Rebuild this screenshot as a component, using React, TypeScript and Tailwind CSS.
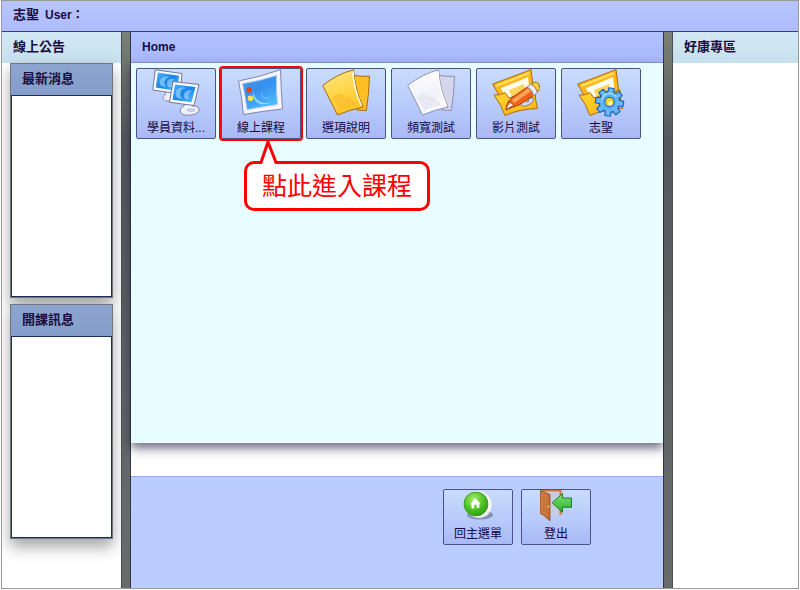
import type { ReactNode } from "react";

interface Shortcut {
  id: string;
  label: string;
  icon: ReactNode;
  hint?: string;
}

/* ── Icons ── */

function ComputersIcon() {
  return (
    <svg viewBox="0 0 48 48" className="h-12 w-12" aria-hidden="true">
      <defs>
        <linearGradient id="pc-screen" x1="0" y1="0" x2="1" y2="1">
          <stop offset="0" stopColor="#55b4fa" />
          <stop offset="0.5" stopColor="#1583ea" />
          <stop offset="1" stopColor="#5cc8ff" />
        </linearGradient>
      </defs>
      <path d="M14 22l-1 4c-3 1-2 6 2 6h6V22z" fill="#eceef8" stroke="#8d90b0" />
      <path d="M3.300 .8L30 4.500 28 25 .8 21z" fill="#fafbff" stroke="#73769c" strokeLinejoin="round" />
      <path d="M5.800 3.500L27 6.700 25.300 22 3.800 18.500z" fill="url(#pc-screen)" />
      <path d="M9 17c-4-6 2-11 8-9-4 1-6 5-3 10zM15 16c-1-5 4-8 8-5-3 0-4 3-2 7-3 1-5 0-6-2z" fill="#a9dcff" opacity=".6" />
      <path d="M33 34l-1 3c-5 2-5 8 1 9 8 1 15-2 14-6-1-3-4-3-7-3v-3z" fill="#f0f2fa" stroke="#7f82a5" />
      <ellipse cx="39" cy="41" rx="4.500" ry="2" fill="#c9cee4" />
      <path d="M21 12.500L47 15.500 42 36.500 17.500 33.300z" fill="#fafbff" stroke="#73769c" strokeLinejoin="round" />
      <path d="M23 15.500L43.500 18 39.600 33.300 20.500 30.700z" fill="url(#pc-screen)" />
      <path d="M25 29c-4-6 1-12 8-10-5 1-6 5-3 11zM32 28c-1-5 4-8 8-6-3 1-4 4-3 8-3 1-4 0-5-2z" fill="#a9dcff" opacity=".6" />
    </svg>
  );
}

function ScreenIcon() {
  return (
    <svg viewBox="0 0 48 48" className="h-12 w-12" aria-hidden="true">
      <defs>
        <linearGradient id="screen-fill" x1="0" y1="0" x2="0.6" y2="1">
          <stop offset="0" stopColor="#4a98e8" />
          <stop offset="0.5" stopColor="#3590ee" />
          <stop offset="1" stopColor="#4dbaff" />
        </linearGradient>
      </defs>
      <path d="M1.500 12Q23 8 43.500.7 44 20 45.500 40 26 42 6.500 45.500 5 28 1.500 12z" fill="#f5f6ff" stroke="#8185a8" strokeLinejoin="round" />
      <path d="M5.500 14.700Q22 12 39.500 6.500 39 21 40.500 35.500 26 37.500 10 40.700 8.500 28 5.500 14.700z" fill="url(#screen-fill)" stroke="#b4c8f4" />
      <path d="M16 21c-2 13 10 18 21 11-9 5-20 1-21-11z" fill="#9cd6ff" />
      <path d="M25 20c-2 7 4 11 9 7-4 6-13 2-9-7z" fill="#6bbaff" />
      <circle cx="12.300" cy="21" r="2.800" fill="#ff3b14" />
      <circle cx="13.500" cy="29.300" r="2.800" fill="#ffe14d" />
    </svg>
  );
}

function PapersIcon({ tone }: { tone: "gold" | "silver" }) {
  const gold = tone === "gold";
  const id = `papers-${tone}`;
  const line = gold ? "#a56a10" : "#8d8fb0";
  return (
    <svg viewBox="0 0 48 48" className="h-12 w-12" aria-hidden="true">
      <defs>
        <linearGradient id={id} x1="0.3" y1="0" x2="0.6" y2="1">
          <stop offset="0" stopColor={gold ? "#ffe47c" : "#ffffff"} />
          <stop offset="0.6" stopColor={gold ? "#ffd23e" : "#f1f1fa"} />
          <stop offset="1" stopColor={gold ? "#ffc324" : "#fdfdff"} />
        </linearGradient>
      </defs>
      <path d="M32 6.500Q40 7.500 47.500 7.300 47 25 44.300 41.500L35 41z" fill={gold ? "#ffbf24" : "#d6d6ea"} stroke={line} strokeLinejoin="round" />
      <path d="M.7 16.500Q15 5 31.500 .8 33 21 41 38 27 41 15.500 46 8 31 .7 16.500z" fill={`url(#${id})`} stroke={line} strokeLinejoin="round" />
      <path d="M10 29c3-5 9-6 12-1 6-1 8 4 13 8-7 1-13 3-18 6-1-5-3-9-7-13z" fill={gold ? "#f7b52b" : "#dcdce9"} opacity=".5" />
      <path d="M30.800 2.500Q32 21 39.300 36.500" fill="none" stroke="#fff" strokeWidth="1.500" />
    </svg>
  );
}

function FolderShape({ id }: { id: string }) {
  return (
    <>
      <defs>
        <linearGradient id={id} x1="0" y1="0" x2="1" y2="1">
          <stop offset="0" stopColor="#ffd92e" />
          <stop offset="1" stopColor="#ffb016" />
        </linearGradient>
      </defs>
      <path d="M.7 15Q20 8 39 .5 41 18 44 37L13 42Q9 28 .7 15z" fill="#ffb71a" stroke="#b06a0c" strokeLinejoin="round" />
      <path d="M4 17Q20 11 37 4" fill="none" stroke="#ffdf66" strokeWidth="2" />
      <path d="M9 19Q22 14 36 8L38 26 15 33z" fill="#fffdf0" />
      <path d="M17 21Q25 18 32 15L34 27 21 31z" fill="#ffd45b" />
      <path d="M2 26Q7 27 13 23.500L17 29Q29 24 43 21 43 31 45.500 39.500 27 40 13 46.500 9 35 2 26z" fill={`url(#${id})`} stroke="#b06a0c" strokeLinejoin="round" />
    </>
  );
}

function FolderPenIcon() {
  return (
    <svg viewBox="0 0 48 48" className="h-12 w-12" aria-hidden="true">
      <FolderShape id="folder-pen" />
      <path d="M28 35l4-4 4 2 1-4 4 0c2 2-1 5-5 7-4 2-6 1-8-1z" fill="#d4d8ec" stroke="#74789a" />
      <path d="M14 41Q14 33 21 28L36 17.500Q43 18 42.500 26L27 36Q20 38 14 41z" fill="#f3641a" stroke="#a83a0a" strokeLinejoin="round" />
      <path d="M20 31L36 19.500 39 22 22 34z" fill="#ffa45f" />
      <path d="M14 41Q15 36 18 33L22 36.500Q18 38 14 41z" fill="#efe5e2" stroke="#9c3108" strokeWidth=".7" />
      <path d="M35 18L39.500 15Q44 17 45.500 23L41.500 27Q41 21 35 18z" fill="#eceefa" stroke="#8b8ead" />
      <path d="M39.500 15Q44 11.500 47 15 49 20 45.500 23 44 18 39.500 15z" fill="#ffd044" stroke="#a87016" />
    </svg>
  );
}

function FolderGearIcon() {
  const teeth = [0, 45, 90, 135, 180, 225, 270, 315];
  return (
    <svg viewBox="0 0 48 48" className="h-12 w-12" aria-hidden="true">
      <FolderShape id="folder-gear" />
      <g transform="translate(32.500 33) rotate(8)">
        {teeth.map((angle) => (
          <path key={angle} d="M-3.200-9L-2.600-14H2.600L3.200-9z" transform={`rotate(${angle})`} fill="#55aaf0" stroke="#1b66ad" strokeWidth="1.200" strokeLinejoin="round" />
        ))}
        <circle r="10.300" fill="#5bb0f4" stroke="#1b66ad" strokeWidth="1.200" />
        {teeth.map((angle) => (
          <path key={angle} d="M-2.500-7L-2-13H2L2.500-7z" transform={`rotate(${angle})`} fill="#68b8f6" />
        ))}
        <path d="M-8-1a8 8 0 0 1 14-5" fill="none" stroke="#a6dafc" strokeWidth="1.500" />
        <circle r="4.600" fill="#ffcf2c" stroke="#2272b8" strokeWidth="1.200" />
        <circle cx="1" cy="1" r="2.300" fill="#fff3b0" />
      </g>
    </svg>
  );
}

function HomeIcon() {
  return (
    <svg viewBox="0 0 32 32" className="h-8 w-8" aria-hidden="true">
      <defs>
        <radialGradient id="home-ball" cx="0.4" cy="0.3" r="0.75">
          <stop offset="0" stopColor="#a4ec72" />
          <stop offset="0.55" stopColor="#4fc522" />
          <stop offset="1" stopColor="#2c9a10" />
        </radialGradient>
      </defs>
      <ellipse cx="18" cy="25" rx="13" ry="4.500" fill="#59617c" opacity=".55" />
      <circle cx="17" cy="15" r="13" fill="#e7ebe8" />
      <circle cx="15.500" cy="14" r="13" fill="#fff" />
      <circle cx="14" cy="14" r="12" fill="url(#home-ball)" stroke="#318f19" strokeWidth=".8" />
      <path d="M13 8L18.500 13.500H17.300V18H14.700V14.800H12.200V18.500H9.500V14.500H8z" fill="#fff" />
    </svg>
  );
}

function LogoutIcon() {
  return (
    <svg viewBox="0 0 32 32" className="h-8 w-8" aria-hidden="true">
      <defs>
        <linearGradient id="door-leaf" x1="0" y1="0" x2="1" y2="0">
          <stop offset="0" stopColor="#d98242" />
          <stop offset="1" stopColor="#b9662a" />
        </linearGradient>
        <linearGradient id="door-arrow" x1="0" y1="0" x2="0" y2="1">
          <stop offset="0" stopColor="#7fe073" />
          <stop offset="1" stopColor="#2ab02b" />
        </linearGradient>
      </defs>
      <path d="M.500 0H21.500V25H.500z" fill="#d0763a" />
      <path d="M3 1.500H19.500V25L10 28z" fill="#c5cde2" />
      <path d="M.500.500L10 4.500V30.700L.800 23z" fill="url(#door-leaf)" stroke="#884114" strokeWidth=".7" />
      <path d="M2.500 4L5 5.200V13L2.500 11.500zM6 5.700L8.300 6.700V14.800L6 13.500zM2.500 15L5 16.500V24L2.500 22zM6 17L8.300 18.300V26.500L6 24.700z" fill="#c06a30" stroke="#e0955a" strokeWidth=".4" />
      <circle cx="8.500" cy="16.500" r="1" fill="#f2d070" />
      <path d="M12.200 12.800L22.500 3.500V8H31.500V17.300H22.500V22.300z" fill="url(#door-arrow)" stroke="#18801f" strokeLinejoin="round" />
    </svg>
  );
}

const SHORTCUTS: Shortcut[] = [
  { id: "profile", label: "學員資料...", icon: <ComputersIcon /> },
  { id: "course", label: "線上課程", icon: <ScreenIcon />, hint: "點此進入課程" },
  { id: "options", label: "選項說明", icon: <PapersIcon tone="gold" /> },
  { id: "bandwidth", label: "頻寬測試", icon: <PapersIcon tone="silver" /> },
  { id: "video", label: "影片測試", icon: <FolderPenIcon /> },
  { id: "zhisheng", label: "志聖", icon: <FolderGearIcon /> },
];

const BUTTON_STYLE =
  "flex cursor-pointer flex-col items-center justify-between rounded-xs border border-[#4b5285] bg-linear-to-b from-[#c9dcfd] via-[#b9ccfb] via-50% to-[#a9b9f6] text-xs leading-5 text-[#160840]";

/* ── Callout bubble with its tail pointing up at the button ── */
function Hint({ text }: { text: string }) {
  return (
    <div className="absolute left-[23px] top-[93px] z-10 rounded-[10px] border-3 border-[#ff0000] bg-white px-[15px] text-[25px] leading-[44px] whitespace-nowrap text-[#ff0000]">
      <svg viewBox="0 0 18 25" className="absolute -top-[25px] left-3 h-[25px] w-[18px]" aria-hidden="true">
        <path d="M3 25L9 4 16 25z" fill="#fff" />
        <path d="M2 23.500L9 3 17 23.500" fill="none" stroke="#f00" strokeWidth="3" />
      </svg>
      {text}
    </div>
  );
}

function NewsPanel({ title }: { title: string }) {
  return (
    <section className="border border-[#707580] shadow-[0_8px_14px_rgba(0,0,0,0.35)]">
      <h3 className="h-[31px] bg-linear-to-b from-[#8ca6d0] to-[#849dca] pl-[11px] leading-[30px]">{title}</h3>
      <div className="h-[202px] border border-[#1c3158] bg-white" />
    </section>
  );
}

function ColumnTitle({ children }: { children: ReactNode }) {
  return (
    <h2 className="h-[31px] bg-linear-to-b from-[#d3e8f4] to-[#c7e0ed] pl-[11px] leading-[30px]">
      {children}
    </h2>
  );
}

export default function App() {
  return (
    <div className="min-h-screen bg-white px-px pb-px font-['Liberation_Sans','Noto_Sans_CJK_TC',sans-serif] text-[13px] text-[#1a0c40]">
      <div className="flex min-h-[calc(100vh-1px)] flex-col border border-[#999999]">
        <header className="flex h-[31px] items-center gap-[6px] border-b border-[#3b4060] bg-linear-to-b from-[#b7c5ff] to-[#aebcff] pb-[2px] pl-[11px] font-bold">
          <span>志聖</span>
          <span className="text-xs">User：</span>
        </header>

        <div className="flex flex-1">
          <aside className="w-[120px] shrink-0 overflow-hidden border-r border-[#484d50] font-bold">
            <ColumnTitle>線上公告</ColumnTitle>
            <div className="flex flex-col gap-[6px] px-2">
              <NewsPanel title="最新消息" />
              <NewsPanel title="開課訊息" />
            </div>
          </aside>

          <div className="w-2 shrink-0 bg-linear-to-b from-[#7b8175] via-[#54575c] via-20% to-[#686d6c]" />

          <main className="flex min-w-0 flex-1 flex-col border-x border-[#30344c]">
            <h1 className="h-[31px] border-b border-[#8f9ddb] bg-linear-to-b from-[#b2c1ff] to-[#a9b8fd] pl-[11px] text-xs leading-[30px] font-bold">
              Home
            </h1>
            <div className="flex-1 bg-[#e8fdff] p-[5px] shadow-[0_5px_10px_rgba(30,20,60,0.65)]">
              <div className="flex flex-wrap gap-[5px]">
                {SHORTCUTS.map((item) => (
                  <div key={item.id} className="relative">
                    <button
                      type="button"
                      className={`${BUTTON_STYLE} h-[71px] w-20 ${item.hint ? "ring-2 ring-[#ff0000]" : ""}`}
                    >
                      {item.icon}
                      <span>{item.label}</span>
                    </button>
                    {item.hint && <Hint text={item.hint} />}
                  </div>
                ))}
              </div>
            </div>
            <footer className="mt-[33px] flex justify-end gap-2 border-t border-[#9aa9ee] bg-[#bbccff] pt-3 pr-[72px] pb-[43px]">
              <button type="button" className={`${BUTTON_STYLE} h-14 w-[70px]`}>
                <HomeIcon />
                <span>回主選單</span>
              </button>
              <button type="button" className={`${BUTTON_STYLE} h-14 w-[70px]`}>
                <LogoutIcon />
                <span>登出</span>
              </button>
            </footer>
          </main>

          <div className="w-2 shrink-0 bg-linear-to-b from-[#7b8175] via-[#54575c] via-20% to-[#686d6c]" />

          <aside className="w-[126px] shrink-0 border-l border-[#484d50] font-bold">
            <ColumnTitle>好康專區</ColumnTitle>
          </aside>
        </div>
      </div>
    </div>
  );
}
